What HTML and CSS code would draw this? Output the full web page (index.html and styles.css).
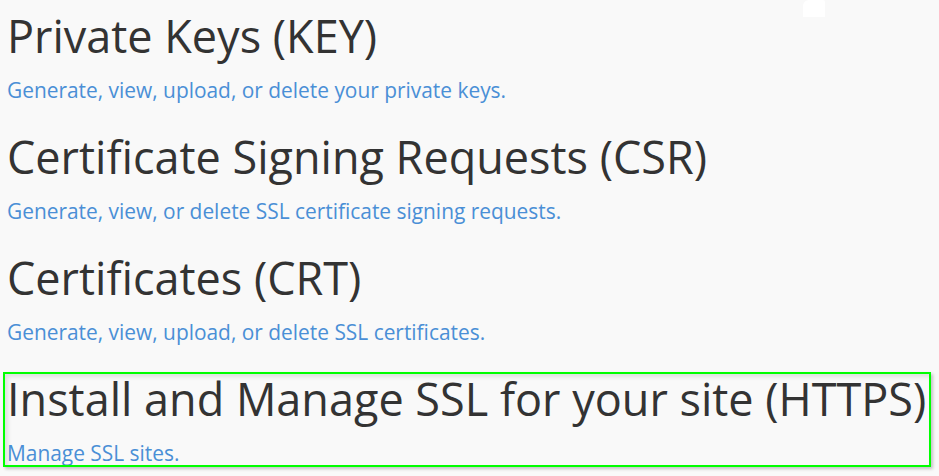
FILE: index.html
```html
<!DOCTYPE html>
<html lang="en">
<head>
    <meta charset="UTF-8">
    <title>SSL/TLS</title>
    <link rel="stylesheet" href="styles.css">
</head>
<body>
    <div class="glare"></div>
    <div class="sections">
        <div class="section">
            <h2>Private Keys (KEY)</h2>
            <a href="#">Generate, view, upload, or delete your private keys.</a>
        </div>
        <div class="section">
            <h2>Certificate Signing Requests (CSR)</h2>
            <a href="#">Generate, view, or delete SSL certificate signing requests.</a>
        </div>
        <div class="section">
            <h2>Certificates (CRT)</h2>
            <a href="#">Generate, view, upload, or delete SSL certificates.</a>
        </div>
        <div class="section highlight">
            <h2>Install and Manage SSL for your site (HTTPS)</h2>
            <a href="#">Manage SSL sites.</a>
        </div>
    </div>
</body>
</html>
```

FILE: styles.css
```css
body {
    margin: 0;
    background: #f9f9f9;
    font-family: "Open Sans", "Liberation Sans", sans-serif;
    color: #333;
}
.sections {
    padding: 0 8px 0 7px;
}
.section {
    height: 121px;
    padding-top: 11px;
    box-sizing: border-box;
}
.section h2 {
    margin: 0 0 15px;
    font-size: 45px;
    font-weight: 400;
    line-height: 49px;
    white-space: nowrap;
}
.section a {
    display: block;
    font-size: 20.9px;
    line-height: 31px;
    color: #4a8fd6;
    text-decoration: none;
}
.highlight {
    position: relative;
}
.highlight::after {
    content: "";
    position: absolute;
    left: -4px;
    top: 9px;
    width: 928px;
    height: 95px;
    box-sizing: border-box;
    border: 2px solid #0f0;
    box-shadow: 2px 2px 3px rgba(0, 0, 0, 0.22), inset 3px 3px 4px rgba(0, 0, 0, 0.1);
    pointer-events: none;
}
.glare {
    position: absolute;
    top: 0;
    left: 803px;
    width: 22px;
    height: 17px;
    background: #fff;
    border-radius: 6px 2px 0 0;
}
```
